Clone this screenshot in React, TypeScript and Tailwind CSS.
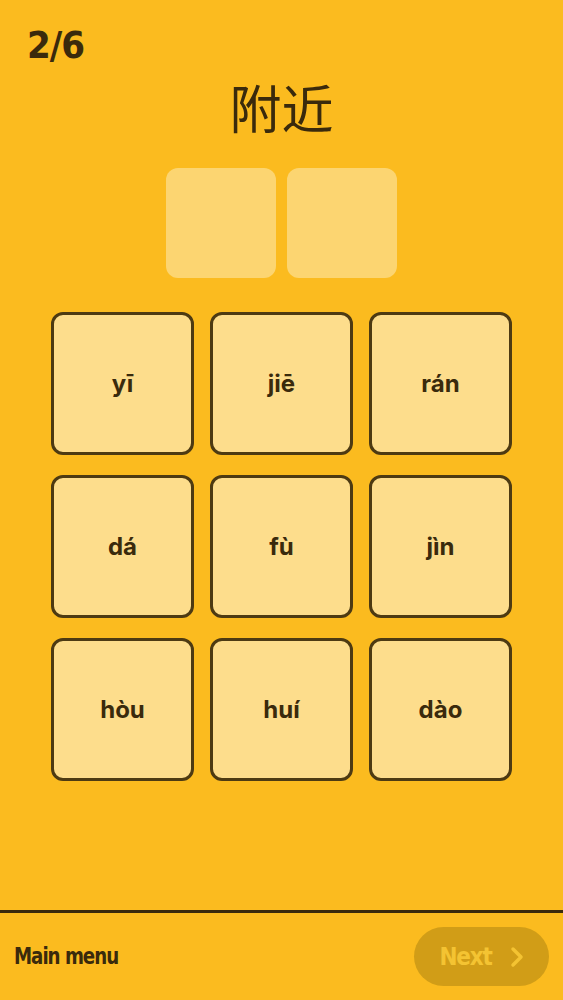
import React from "react";

const syllables = ["yī", "jiē", "rán", "dá", "fù", "jìn", "hòu", "huí", "dào"];

const displayFont = {
  fontFamily: '"DejaVu Sans", sans-serif',
};

export default function App() {
  return (
    <div className="w-full h-[1000px] bg-[#fbbb1f] flex flex-col text-[#3a2a0c] overflow-hidden">
      <div className="flex-1 flex flex-col">
        <div className="px-[27px] pt-[26px]">
          <span
            className="text-[38px] font-black leading-none tracking-tight font-stretch-condensed"
            style={displayFont}
          >
            2/6
          </span>
        </div>

        <h1 className="text-center text-[52px] leading-none mt-[17px] font-['Noto_Sans_CJK_SC',sans-serif] font-normal">
          附近
        </h1>

        <div className="flex justify-center gap-[11px] mt-[35px]">
          <div className="w-[110px] h-[110px] rounded-[12px] bg-[#fcd571]" />
          <div className="w-[110px] h-[110px] rounded-[12px] bg-[#fcd571]" />
        </div>

        <div className="grid grid-cols-3 gap-x-[16px] gap-y-[20px] w-[461px] mx-auto mt-[34px]">
          {syllables.map((s) => (
            <button
              key={s}
              className="h-[143px] rounded-[12px] border-[3px] border-[#4d3a12] bg-[#fddd8c] flex items-center justify-center"
            >
              <span className="text-[24px] font-bold font-['Inter',sans-serif] text-[#3a2a0c]">
                {s}
              </span>
            </button>
          ))}
        </div>
      </div>

      <div className="h-[90px] border-t-[3px] border-[#3a2a0c] flex items-center justify-between pl-[14px] pr-[14px]">
        <span
          className="inline-block origin-left scale-x-[0.88] text-[23px] font-bold tracking-tighter font-stretch-condensed"
          style={displayFont}
        >
          Main menu
        </span>
        <button className="w-[135px] h-[59px] rounded-full bg-[#d19d17] flex items-center justify-center gap-[18px] text-[#f4c332]">
          <span
            className="text-[24px] font-bold tracking-tighter font-stretch-condensed"
            style={displayFont}
          >
            Next
          </span>
          <svg width="14" height="22" viewBox="0 0 14 22" fill="none">
            <path d="M3 3l8 8-8 8" stroke="currentColor" strokeWidth="3.5" strokeLinecap="round" strokeLinejoin="round" />
          </svg>
        </button>
      </div>
    </div>
  );
}
